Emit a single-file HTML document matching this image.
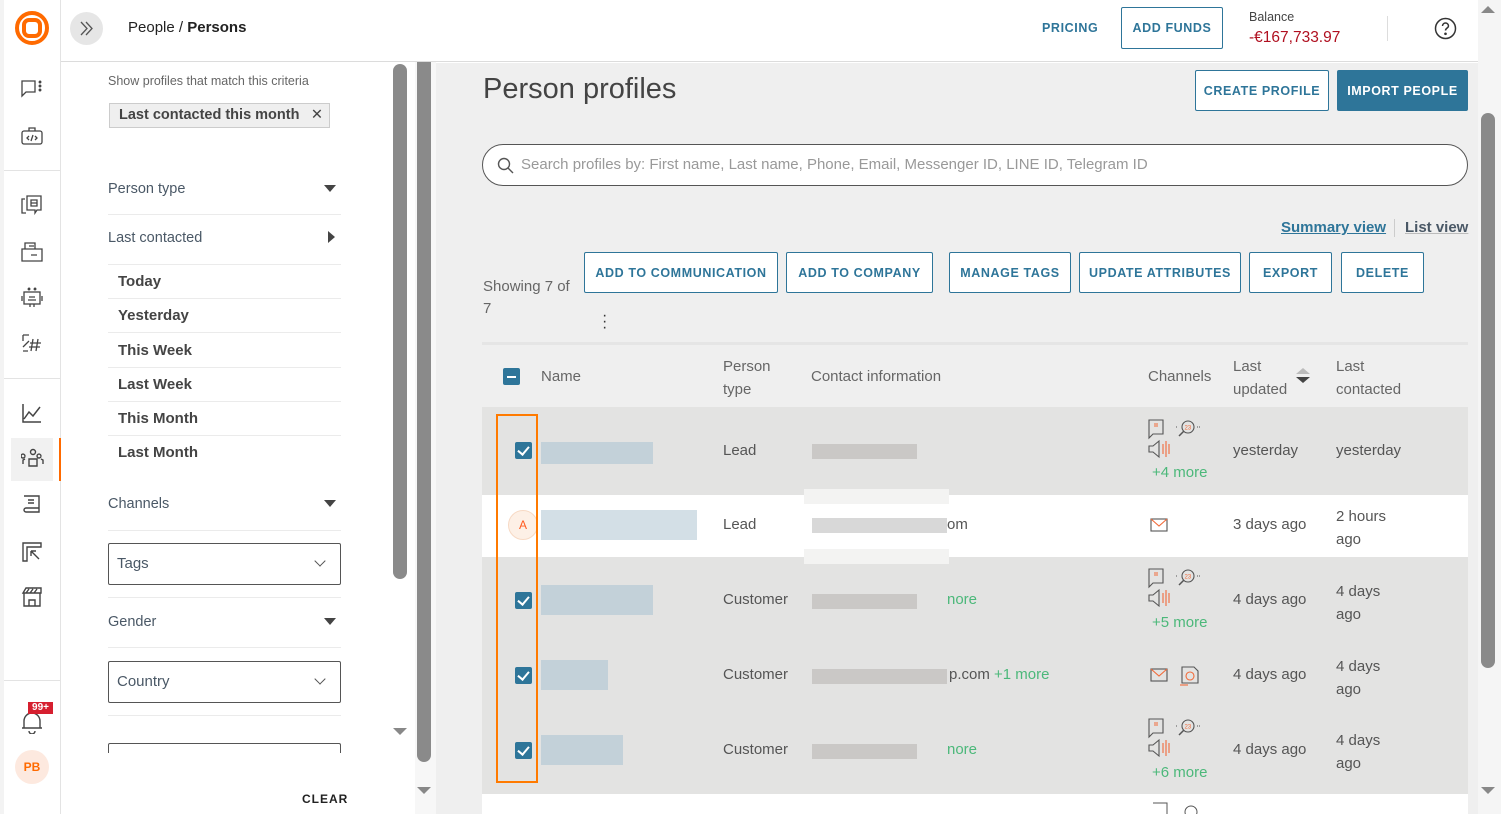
<!DOCTYPE html><html><head><style>
*{box-sizing:border-box;margin:0;padding:0}
body{width:1501px;height:814px;overflow:hidden;background:#fff;font-family:"Liberation Sans",sans-serif;color:#444;position:relative}
.a{position:absolute}
.btn{position:absolute;border:1px solid #2e7599;background:#fff;color:#2e7599;font-size:12.5px;font-weight:bold;letter-spacing:0.6px;display:flex;align-items:center;justify-content:center;border-radius:2px;white-space:nowrap}
.side svg{position:absolute;left:21px}
.fl{position:absolute;left:108px;width:233px;border-bottom:1px solid #ebebeb;font-size:14.5px;color:#4a5866}
.sub{position:absolute;left:118px;font-size:15px;font-weight:bold;color:#444}
.subl{position:absolute;left:108px;width:233px;height:1px;background:#ebebeb}
.tri{position:absolute;width:0;height:0;border-left:6px solid transparent;border-right:6px solid transparent;border-top:7px solid #444}
.sel{position:absolute;left:108px;width:233px;height:42px;border:1px solid #555;border-radius:2px;font-size:15px;color:#4a5866;padding:11px 8px}
.sel:after{content:"";position:absolute;right:16px;top:13px;width:7px;height:7px;border-right:1.3px solid #555;border-bottom:1.3px solid #555;transform:rotate(45deg)}
.t{position:absolute;font-size:15px;color:#555}
.row{position:absolute;left:482px;width:986px}
.cb{position:absolute;left:515px;width:17px;height:17px;background:#2e7599;border-radius:2px}
.cb:after{content:"";position:absolute;left:5px;top:2px;width:5px;height:9px;border-right:2px solid #fff;border-bottom:2px solid #fff;transform:rotate(40deg)}
.bn{position:absolute;background:#c3d1d9}
.bc{position:absolute;background:#cac8c6;height:15px}
.more{color:#4cb87a}
</style></head><body>
<div class="a" style="left:0;top:0;width:61px;height:814px;background:#fff;border-right:1px solid #e3e3e3"></div>
<div class="a" style="left:0;top:0;width:4px;height:814px;background:#f3f3f3"></div>
<svg class="a" style="left:14px;top:10px" width="36" height="36" viewBox="0 0 36 36"><circle cx="18" cy="18" r="15" fill="none" stroke="#ff6a00" stroke-width="4"/><rect x="10" y="10" width="16" height="16" rx="5" fill="none" stroke="#ff6a00" stroke-width="4"/></svg>
<div class="a" style="left:4px;top:170px;width:57px;height:1px;background:#e3e3e3"></div>
<div class="a" style="left:4px;top:378px;width:57px;height:1px;background:#e3e3e3"></div>
<div class="a" style="left:4px;top:680px;width:57px;height:1px;background:#e3e3e3"></div>
<div class="a" style="left:11px;top:438px;width:42px;height:43px;background:#f1f1f1"></div>
<div class="a" style="left:59px;top:438px;width:2px;height:43px;background:#ff6a00"></div>
<div class="side" style="position:absolute;left:0;top:0">
<svg style="top:79px" width="22" height="20" viewBox="0 0 22 20" fill="none" stroke="#444" stroke-width="1.3"><path d="M1 2h13v11H5l-4 4z"/><circle cx="19" cy="3" r=".8" fill="#444"/><circle cx="19" cy="7" r=".8" fill="#444"/><circle cx="19" cy="11" r=".8" fill="#444"/></svg>
<svg style="top:126px" width="22" height="20" viewBox="0 0 22 20" fill="none" stroke="#444" stroke-width="1.3"><rect x="1" y="5" width="20" height="13" rx="2"/><path d="M8 5V2h6v3M8 10l-2 2 2 2M14 10l2 2-2 2M12 9l-2 6"/></svg>
<svg style="top:195px" width="22" height="22" viewBox="0 0 22 22" fill="none" stroke="#444" stroke-width="1.3"><path d="M4 4H1v14h4M6 1h14v14h-4l-2 3V15H6z"/><path d="M10 5h6v6h-6zM10 8h6"/></svg>
<svg style="top:241px" width="22" height="22" viewBox="0 0 22 22" fill="none" stroke="#444" stroke-width="1.3"><path d="M4 8V2h10v6M1 8h20v12H1zM8 5h5M10 14h6"/></svg>
<svg style="top:286px" width="22" height="22" viewBox="0 0 22 22" fill="none" stroke="#444" stroke-width="1.3"><rect x="3" y="6" width="16" height="12"/><path d="M1 10v5M21 10v5M8 11h6M7 14h8M9 18v3M13 18v3"/><circle cx="8" cy="3" r=".8" fill="#444"/><circle cx="14" cy="3" r=".8" fill="#444"/></svg>
<svg style="top:333px" width="22" height="22" viewBox="0 0 22 22" fill="none" stroke="#444" stroke-width="1.3"><path d="M2 2h6M2 2v6M8 8l-6 6M12 6l-2 12M17 6l-2 12M9 10h11M8 14h11M2 18h5"/></svg>
<svg style="top:402px" width="22" height="22" viewBox="0 0 22 22" fill="none" stroke="#444" stroke-width="1.5"><path d="M2 2v18h18M3 17l5-7 4 4 7-9"/></svg>
<svg style="top:448px" width="24" height="22" viewBox="0 0 24 22" fill="none" stroke="#444" stroke-width="1.4"><circle cx="12" cy="4" r="2.5"/><path d="M8 18v-7h8v7zM4 8a2 2 0 100 .1M20 8a2 2 0 100 .1M2 16v-4l2-1M22 16v-4l-2-1"/></svg>
<svg style="top:494px" width="22" height="22" viewBox="0 0 22 22" fill="none" stroke="#444" stroke-width="1.4"><path d="M3 2h15v16H5a2 2 0 010-4h13M7 6h6M7 9h6"/></svg>
<svg style="top:541px" width="22" height="22" viewBox="0 0 22 22" fill="none" stroke="#444" stroke-width="1.4"><path d="M2 2h18v4H6v14H2zM10 10l8 8M10 10h5M10 10v5"/></svg>
<svg style="top:586px" width="22" height="22" viewBox="0 0 22 22" fill="none" stroke="#444" stroke-width="1.4"><path d="M2 7h18V2H5zM3 7v13h16V7M8 20v-6h6v6M8 3l-3 4M12 3l-3 4M16 3l-3 4"/></svg>
<svg style="top:710px" width="22" height="24" viewBox="0 0 22 24" fill="none" stroke="#444" stroke-width="1.4"><path d="M3 18V11a8 8 0 0116 0v7zM1 18h20M8 21a3 3 0 006 0"/></svg>
</div>
<div class="a" style="left:28px;top:702px;width:25px;height:12px;background:#d61f2f;color:#fff;font-size:10px;font-weight:bold;text-align:center;line-height:12px">99+</div>
<div class="a" style="left:15px;top:750px;width:34px;height:34px;border-radius:50%;background:#fde9df;color:#ff6a00;font-size:12px;font-weight:bold;text-align:center;line-height:34px">PB</div>

<div class="a" style="left:61px;top:0;width:1440px;height:62px;background:#fff;border-bottom:1px solid #dcdcdc"></div>
<div class="a" style="left:70px;top:12px;width:33px;height:33px;border-radius:50%;background:#e6e6e6"></div>
<svg class="a" style="left:78px;top:20px" width="17" height="17" viewBox="0 0 17 17" fill="none" stroke="#555" stroke-width="1.3"><path d="M3 2l6 6.5-6 6.5M8 2l6 6.5-6 6.5"/></svg>
<div class="a" style="left:128px;top:19px;font-size:15px;color:#222">People / <b>Persons</b></div>
<div class="a" style="left:1042px;top:21px;font-size:12.5px;font-weight:bold;letter-spacing:0.6px;color:#2e7599">PRICING</div>
<div class="btn" style="left:1121px;top:7px;width:102px;height:42px">ADD FUNDS</div>
<div class="a" style="left:1249px;top:10px;font-size:12.5px;color:#444">Balance</div>
<div class="a" style="left:1249px;top:29px;font-size:15.5px;color:#b01020">-€167,733.97</div>
<div class="a" style="left:1387px;top:16px;width:1px;height:25px;background:#ddd"></div>
<svg class="a" style="left:1434px;top:17px" width="23" height="23" viewBox="0 0 23 23" fill="none" stroke="#333" stroke-width="1.5"><circle cx="11.5" cy="11.5" r="10"/><path d="M8.5 9a3 3 0 116 0c0 2-3 2-3 4.5"/><circle cx="11.5" cy="16.8" r=".6" fill="#333"/></svg>

<div class="a" style="left:108px;top:74px;font-size:12.5px;color:#666">Show profiles that match this criteria</div>
<div class="a" style="left:109px;top:103px;width:221px;height:25px;background:#efefef;border:1px solid #ccc;font-size:14.5px;font-weight:bold;color:#444;padding:3px 9px;white-space:nowrap">Last contacted this month<span style="font-weight:normal;position:absolute;right:6px;top:3px">✕</span></div>
<div class="fl" style="top:181px;height:34px">Person type</div><div class="tri" style="left:324px;top:185px"></div>
<div class="fl" style="top:230px;height:35px">Last contacted</div>
<div class="a" style="left:328px;top:231px;width:0;height:0;border-top:6px solid transparent;border-bottom:6px solid transparent;border-left:7px solid #444"></div>
<div class="sub" style="top:273px">Today</div><div class="subl" style="top:298px"></div>
<div class="sub" style="top:307px">Yesterday</div><div class="subl" style="top:332px"></div>
<div class="sub" style="top:342px">This Week</div><div class="subl" style="top:367px"></div>
<div class="sub" style="top:376px">Last Week</div><div class="subl" style="top:401px"></div>
<div class="sub" style="top:410px">This Month</div><div class="subl" style="top:435px"></div>
<div class="sub" style="top:444px">Last Month</div>
<div class="fl" style="top:496px;height:35px">Channels</div><div class="tri" style="left:324px;top:500px"></div>
<div class="sel" style="top:543px">Tags</div>
<div class="subl" style="top:597px"></div>
<div class="fl" style="top:614px;height:34px">Gender</div><div class="tri" style="left:324px;top:618px"></div>
<div class="sel" style="top:661px">Country</div>
<div class="subl" style="top:715px"></div>
<div class="a" style="left:108px;top:743px;width:233px;height:10px;border:1px solid #555;border-bottom:none;border-radius:2px 2px 0 0"></div>
<div class="a" style="left:62px;top:754px;width:326px;height:60px;background:#fff"></div>
<div class="a" style="left:302px;top:792px;font-size:12px;font-weight:bold;letter-spacing:1px;color:#222">CLEAR</div>
<div class="a" style="left:388px;top:62px;width:27px;height:752px;background:#fff"></div>
<div class="a" style="left:393px;top:64px;width:14px;height:515px;background:#8a8a8a;border-radius:7px"></div>
<div class="a" style="left:393px;top:728px;width:0;height:0;border-left:7px solid transparent;border-right:7px solid transparent;border-top:7px solid #888"></div>
<div class="a" style="left:415px;top:62px;width:21px;height:752px;background:#f7f7f7"></div>
<div class="a" style="left:417px;top:62px;width:14px;height:700px;background:#8a8a8a;border-radius:0 0 7px 7px"></div>
<div class="a" style="left:417px;top:787px;width:0;height:0;border-left:7px solid transparent;border-right:7px solid transparent;border-top:7px solid #888"></div>

<div class="a" style="left:436px;top:63px;width:1042px;height:751px;background:#efefef"></div>
<div class="a" style="left:1478px;top:0;width:23px;height:814px;background:#f5f5f5"></div>
<div class="a" style="left:1481px;top:6px;width:0;height:0;border-left:7px solid transparent;border-right:7px solid transparent;border-bottom:7px solid #888"></div>
<div class="a" style="left:1481px;top:113px;width:14px;height:555px;background:#8a8a8a;border-radius:7px"></div>
<div class="a" style="left:1481px;top:787px;width:0;height:0;border-left:7px solid transparent;border-right:7px solid transparent;border-top:7px solid #888"></div>

<div class="a" style="left:483px;top:73px;font-size:29px;color:#444">Person profiles</div>
<div class="btn" style="left:1195px;top:70px;width:134px;height:41px">CREATE PROFILE</div>
<div class="btn" style="left:1337px;top:70px;width:131px;height:41px;background:#2e7599;color:#fff">IMPORT PEOPLE</div>
<div class="a" style="left:482px;top:144px;width:986px;height:42px;border:1px solid #555;border-radius:21px;background:#fff"></div>
<svg class="a" style="left:497px;top:157px" width="17" height="17" viewBox="0 0 17 17" fill="none" stroke="#555" stroke-width="1.4"><circle cx="7" cy="7" r="5.5"/><path d="M11 11l5 5"/></svg>
<div class="a" style="left:521px;top:156px;font-size:15px;color:#999">Search profiles by: First name, Last name, Phone, Email, Messenger ID, LINE ID, Telegram ID</div>
<div class="a" style="left:1281px;top:219px;font-size:15px;font-weight:bold;color:#2e7599;text-decoration:underline">Summary view</div>
<div class="a" style="left:1394px;top:219px;width:1px;height:18px;background:#ccc"></div>
<div class="a" style="left:1405px;top:219px;font-size:15px;font-weight:bold;color:#4a5866;text-decoration:underline;text-decoration-color:#bbb">List view</div>
<div class="a" style="left:483px;top:276px;font-size:15px;color:#666;line-height:22px">Showing 7 of<br>7</div>
<div class="btn" style="left:584px;top:252px;width:194px;height:41px">ADD TO COMMUNICATION</div>
<div class="btn" style="left:786px;top:252px;width:147px;height:41px">ADD TO COMPANY</div>
<div class="btn" style="left:949px;top:252px;width:122px;height:41px">MANAGE TAGS</div>
<div class="btn" style="left:1079px;top:252px;width:162px;height:41px">UPDATE ATTRIBUTES</div>
<div class="btn" style="left:1249px;top:252px;width:83px;height:41px">EXPORT</div>
<div class="btn" style="left:1341px;top:252px;width:83px;height:41px">DELETE</div>
<div class="a" style="left:602px;top:313px;font-size:16px;line-height:6px;color:#333">·<br>·<br>·</div>
<div class="a" style="left:482px;top:342px;width:986px;height:3px;background:#e5e5e5"></div>
<div class="a" style="left:503px;top:368px;width:17px;height:17px;background:#2e7599;border-radius:2px"><div style="margin:7.5px 4px;height:2px;background:#fff"></div></div>
<div class="t" style="left:541px;top:368px;color:#666">Name</div>
<div class="t" style="left:723px;top:355px;line-height:23px;color:#666">Person<br>type</div>
<div class="t" style="left:811px;top:368px;color:#666">Contact information</div>
<div class="t" style="left:1148px;top:368px;color:#666">Channels</div>
<div class="t" style="left:1233px;top:355px;line-height:23px;color:#666">Last<br>updated</div>
<div class="a" style="left:1296px;top:368px;width:0;height:0;border-left:7px solid transparent;border-right:7px solid transparent;border-bottom:6px solid #bbb"></div>
<div class="a" style="left:1296px;top:377px;width:0;height:0;border-left:7px solid transparent;border-right:7px solid transparent;border-top:6px solid #444"></div>
<div class="t" style="left:1336px;top:355px;line-height:23px;color:#666">Last<br>contacted</div>

<div class="row" style="top:407px;height:88px;background:#e3e3e2"></div>
<div class="row" style="top:495px;height:62px;background:#fff"></div>
<div class="row" style="top:557px;height:237px;background:#e3e3e2"></div>
<div class="row" style="top:794px;height:20px;background:#fff"></div>
<div class="a" style="left:804px;top:489px;width:145px;height:15px;background:#f3f3f2"></div>
<div class="a" style="left:804px;top:549px;width:145px;height:15px;background:#f3f3f2"></div>

<div class="cb" style="top:442px"></div>
<div class="bn" style="left:541px;top:442px;width:112px;height:22px"></div>
<div class="t" style="left:723px;top:442px">Lead</div>
<div class="bc" style="left:812px;top:444px;width:105px"></div>
<div class="t" style="left:1233px;top:442px">yesterday</div><div class="t" style="left:1336px;top:442px">yesterday</div>

<div class="a" style="left:508px;top:510px;width:30px;height:30px;border-radius:50%;background:#fdf0e6;border:1px solid #f7d9c4;color:#ff5a1f;font-size:12px;text-align:center;line-height:28px">A</div>
<div class="bn" style="left:541px;top:510px;width:156px;height:30px;background:#d3dfe6"></div>
<div class="t" style="left:723px;top:516px">Lead</div>
<div class="bc" style="left:812px;top:518px;width:135px;background:#d8d8d8"></div><div class="t" style="left:947px;top:516px">om</div>
<div class="t" style="left:1233px;top:516px">3 days ago</div><div class="t" style="left:1336px;top:505px;line-height:23px">2 hours<br>ago</div>

<div class="cb" style="top:592px"></div>
<div class="bn" style="left:541px;top:585px;width:112px;height:30px"></div>
<div class="t" style="left:723px;top:591px">Customer</div>
<div class="bc" style="left:812px;top:594px;width:105px"></div><div class="t more" style="left:947px;top:591px">nore</div>
<div class="t" style="left:1233px;top:591px">4 days ago</div><div class="t" style="left:1336px;top:580px;line-height:23px">4 days<br>ago</div>

<div class="cb" style="top:667px"></div>
<div class="bn" style="left:541px;top:660px;width:67px;height:30px"></div>
<div class="t" style="left:723px;top:666px">Customer</div>
<div class="bc" style="left:812px;top:669px;width:135px"></div><div class="t" style="left:949px;top:666px">p.com <span class="more">+1 more</span></div>
<div class="t" style="left:1233px;top:666px">4 days ago</div><div class="t" style="left:1336px;top:655px;line-height:23px">4 days<br>ago</div>

<div class="cb" style="top:742px"></div>
<div class="bn" style="left:541px;top:735px;width:82px;height:30px"></div>
<div class="t" style="left:723px;top:741px">Customer</div>
<div class="bc" style="left:812px;top:744px;width:105px"></div><div class="t more" style="left:947px;top:741px">nore</div>
<div class="t" style="left:1233px;top:741px">4 days ago</div><div class="t" style="left:1336px;top:729px;line-height:23px">4 days<br>ago</div>

<svg width="0" height="0" style="position:absolute"><defs>
<g id="ch"><path d="M1 1h14v14H5l-4 4z" fill="none" stroke="#555" stroke-width="1.1"/><path d="M6 5h4M6 7h4" stroke="#f26b3a"/>
<circle cx="40" cy="8" r="6" fill="none" stroke="#555" stroke-width="1.1"/><path d="M36 12l-5 5" stroke="#555" stroke-width="1.5"/><path d="M28 8h2M49 8h3" stroke="#555" stroke-dasharray="1 1"/><text x="36.5" y="10.5" font-size="6" fill="#f26b3a" font-family="Liberation Sans">23</text>
<path d="M1 27h4l6-5v16l-6-5H1z" fill="none" stroke="#555" stroke-width="1.1"/><path d="M15 25v10M18 22v16M21 25v10" stroke="#f26b3a" stroke-width="1.1"/></g>
<g id="ml"><rect x="1" y="1" width="16" height="12" fill="none" stroke="#555" stroke-width="1.1"/><path d="M1 1l8 7 8-7" fill="none" stroke="#f26b3a" stroke-width="1.1"/></g>
</defs></svg>
<svg class="a" style="left:1148px;top:419px" width="60" height="42"><use href="#ch"/></svg>
<div class="t more" style="left:1152px;top:464px">+4 more</div>
<svg class="a" style="left:1150px;top:518px" width="20" height="16"><use href="#ml"/></svg>
<svg class="a" style="left:1148px;top:568px" width="60" height="42"><use href="#ch"/></svg>
<div class="t more" style="left:1152px;top:614px">+5 more</div>
<svg class="a" style="left:1150px;top:668px" width="20" height="16"><use href="#ml"/></svg>
<svg class="a" style="left:1179px;top:665px" width="22" height="22" fill="none" stroke="#f26b3a" stroke-width="1.1"><path d="M3 2h12l4 4v12H3z" stroke="#555"/><circle cx="11" cy="11" r="4"/><path d="M1 20h8"/></svg>
<svg class="a" style="left:1148px;top:718px" width="60" height="42"><use href="#ch"/></svg>
<div class="t more" style="left:1152px;top:764px">+6 more</div>
<svg class="a" style="left:1150px;top:802px" width="60" height="12"><path d="M3 1h14v11" fill="none" stroke="#555"/><circle cx="41" cy="10" r="6" fill="none" stroke="#555"/></svg>

<div class="a" style="left:496px;top:414px;width:42px;height:369px;border:2px solid #ff7a00"></div>
</body></html>
